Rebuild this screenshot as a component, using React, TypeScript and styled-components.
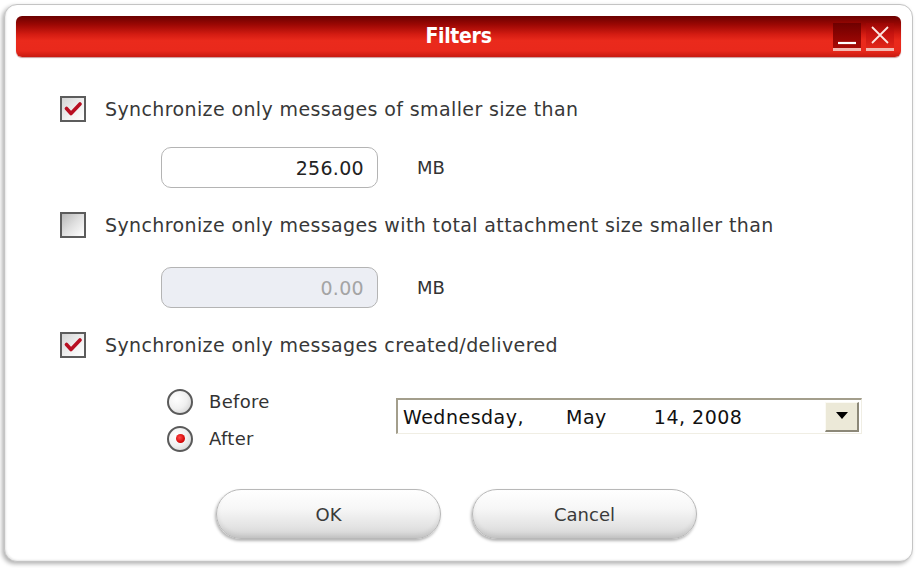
import styled, { createGlobalStyle } from 'styled-components';

const GlobalStyle = createGlobalStyle`
  html, body {
    margin: 0;
    padding: 0;
    background: #ffffff;
  }
  body {
    font-family: "DejaVu Sans", "Liberation Sans", sans-serif;
  }
`;

function CheckMark() {
  return (
    <svg width="18" height="16" viewBox="0 0 18 16">
      <path d="M2.5 7.5 L7 12.5 L16 3" fill="none" stroke="#b80f22" strokeWidth="3.6" strokeLinecap="round" strokeLinejoin="round" />
    </svg>
  );
}

function DropArrow() {
  return (
    <svg width="14" height="8" viewBox="0 0 14 8">
      <path d="M1 0 L13 0 L7 7 Z" fill="#000" />
    </svg>
  );
}

function MinIcon() {
  return (
    <svg width="22" height="22" viewBox="0 0 22 22">
      <line x1="2" y1="19" x2="20" y2="19" stroke="#fff" strokeWidth="2.2" />
    </svg>
  );
}

function CloseIcon() {
  return (
    <svg width="22" height="22" viewBox="0 0 22 22">
      <path d="M3 3 L19 19 M19 3 L3 19" stroke="#fde6e2" strokeWidth="1.8" fill="none" />
    </svg>
  );
}

export default function App() {
  return (
    <>
      <GlobalStyle />
      <Page>
        <Frame>
          <TitleBar>
            <span />
            <Title>Filters</Title>
            <Controls>
              <WinButton $tone="dark">
                <MinIcon />
              </WinButton>
              <WinButton $tone="bright">
                <CloseIcon />
              </WinButton>
            </Controls>
          </TitleBar>

          <Content>
            <CheckRow $top={39}>
              <CheckBox $checked>
                <CheckMark />
              </CheckBox>
              <Label>Synchronize only messages of smaller size than</Label>
            </CheckRow>
            <FieldRow $top={25}>
              <Field>256.00</Field>
              <Unit>MB</Unit>
            </FieldRow>

            <CheckRow $top={24}>
              <CheckBox />
              <Label>Synchronize only messages with total attachment size smaller than</Label>
            </CheckRow>
            <FieldRow $top={29}>
              <Field $disabled>0.00</Field>
              <Unit>MB</Unit>
            </FieldRow>

            <CheckRow $top={24}>
              <CheckBox $checked>
                <CheckMark />
              </CheckBox>
              <Label>Synchronize only messages created/delivered</Label>
            </CheckRow>

            <DateRow>
              <RadioGroup>
                <RadioRow>
                  <Radio />
                  <RadioLabel>Before</RadioLabel>
                </RadioRow>
                <RadioRow>
                  <Radio $checked />
                  <RadioLabel>After</RadioLabel>
                </RadioRow>
              </RadioGroup>
              <Combo>
                <ComboText>
                  <span>Wednesday,</span>
                  <Month>May</Month>
                  <span>14, 2008</span>
                </ComboText>
                <ComboButton>
                  <DropArrow />
                </ComboButton>
              </Combo>
            </DateRow>

            <ButtonRow>
              <PillButton>OK</PillButton>
              <PillButton>Cancel</PillButton>
            </ButtonRow>
          </Content>
        </Frame>
      </Page>
    </>
  );
}

const Page = styled.div`
  padding: 4px;
  width: 923px;
  height: 568px;
  box-sizing: border-box;
`;

const Frame = styled.div`
  width: 909px;
  height: 558px;
  box-sizing: border-box;
  border: 1px solid #c4c4c4;
  border-radius: 13px;
  padding: 11px;
  background: #fff;
  box-shadow: -2px 2px 4px rgba(0, 0, 0, 0.3), inset 1px -1px 2px rgba(0, 0, 0, 0.1);
  display: flex;
  flex-direction: column;
`;

const TitleBar = styled.div`
  height: 41px;
  border-radius: 6px;
  display: grid;
  grid-template-columns: 1fr auto 1fr;
  align-items: center;
  background: linear-gradient(
    to bottom,
    #6a0000 0%,
    #9e0804 22%,
    #d41c12 45%,
    #ea2a1c 60%,
    #e9291c 85%,
    #c81a10 100%
  );
  box-shadow: 0 1px 1px rgba(120, 0, 0, 0.4);
`;

const Title = styled.div`
  color: #fff;
  font-family: "DejaVu Sans Condensed", "DejaVu Sans", sans-serif;
  font-stretch: condensed;
  font-weight: bold;
  font-size: 21px;
  letter-spacing: -0.3px;
  padding-bottom: 2px;
`;

const Controls = styled.div`
  justify-self: end;
  display: flex;
  gap: 5px;
  margin-right: 7px;
`;

const WinButton = styled.div<{ $tone: 'dark' | 'bright' }>`
  width: 28px;
  height: 28px;
  box-sizing: border-box;
  display: flex;
  align-items: center;
  justify-content: center;
  background: ${({ $tone }) =>
    $tone === 'dark'
      ? 'linear-gradient(to bottom, #6e0000 0%, #8c0402 50%, #a80a06 100%)'
      : 'linear-gradient(to bottom, #9a0604 0%, #c81410 45%, #e2261a 100%)'};
  border-bottom: 3px solid #f4b8b0;
`;

const Content = styled.div`
  display: flex;
  flex-direction: column;
  padding-left: 44px;
  color: #333;
`;

const CheckRow = styled.div<{ $top: number }>`
  display: flex;
  align-items: center;
  gap: 19px;
  margin-top: ${({ $top }) => $top}px;
  height: 26px;
`;

const CheckBox = styled.div<{ $checked?: boolean }>`
  width: 26px;
  height: 26px;
  box-sizing: border-box;
  border: 2px solid #5c5c5c;
  display: flex;
  align-items: center;
  justify-content: center;
  background: ${({ $checked }) =>
    $checked
      ? 'linear-gradient(135deg, #d4d4d4 0%, #f2f2f2 60%, #ffffff 100%)'
      : 'linear-gradient(135deg, #b8b8b8 0%, #e0e0e0 50%, #ffffff 100%)'};
`;

const Label = styled.span`
  font-size: 19px;
  letter-spacing: 0.38px;
  color: #383838;
  white-space: nowrap;
`;

const FieldRow = styled.div<{ $top: number }>`
  display: flex;
  align-items: center;
  gap: 39px;
  margin-top: ${({ $top }) => $top}px;
  margin-left: 101px;
`;

const Field = styled.div<{ $disabled?: boolean }>`
  width: 217px;
  height: 41px;
  box-sizing: border-box;
  border: 1px solid #b4b4b4;
  border-radius: 10px;
  display: flex;
  align-items: center;
  justify-content: flex-end;
  padding-right: 13px;
  font-size: 19px;
  letter-spacing: 0.3px;
  color: ${({ $disabled }) => ($disabled ? '#a4a4a4' : '#222')};
  background: ${({ $disabled }) => ($disabled ? '#eceef4' : '#fff')};
`;

const Unit = styled.span`
  font-size: 18px;
  color: #333;
`;

const DateRow = styled.div`
  display: flex;
  margin-top: 31px;
  margin-left: 107px;
`;

const RadioGroup = styled.div`
  width: 229px;
  display: flex;
  flex-direction: column;
  gap: 12px;
`;

const RadioRow = styled.div`
  display: flex;
  align-items: center;
  gap: 16px;
  height: 25px;
`;

const Radio = styled.div<{ $checked?: boolean }>`
  width: 26px;
  height: 26px;
  box-sizing: border-box;
  border-radius: 50%;
  border: 2px solid #5a5a5a;
  background: radial-gradient(circle at 35% 35%, #ffffff 0%, #f0f0f0 50%, #c8c8c8 100%);
  display: flex;
  align-items: center;
  justify-content: center;

  &::after {
    content: '';
    display: ${({ $checked }) => ($checked ? 'block' : 'none')};
    width: 9px;
    height: 9px;
    border-radius: 50%;
    background: radial-gradient(circle at 40% 40%, #ff4a4a 0%, #d00000 70%, #a00000 100%);
  }
`;

const RadioLabel = styled.span`
  font-size: 18px;
  letter-spacing: 0.3px;
  color: #333;
`;

const Combo = styled.div`
  width: 466px;
  height: 36px;
  margin-top: 9px;
  box-sizing: border-box;
  border-top: 2px solid #a39e8c;
  border-left: 2px solid #a39e8c;
  border-right: 1px solid #f0eee4;
  border-bottom: 1px solid #f0eee4;
  display: flex;
  align-items: center;
  background: #fff;
`;

const ComboText = styled.div`
  flex: 1;
  display: flex;
  align-items: center;
  padding-left: 5px;
  font-size: 19px;
  letter-spacing: 0.5px;
  color: #111;
  white-space: nowrap;
`;

const Month = styled.span`
  margin-left: 42px;
  margin-right: 47px;
`;

const ComboButton = styled.div`
  width: 34px;
  height: 30px;
  margin-right: 2px;
  box-sizing: border-box;
  background: #ece9d8;
  border-top: 1px solid #fbfaf4;
  border-left: 1px solid #fbfaf4;
  border-right: 2px solid #8c8878;
  border-bottom: 2px solid #8c8878;
  display: flex;
  align-items: center;
  justify-content: center;
`;

const ButtonRow = styled.div`
  display: flex;
  gap: 31px;
  margin-top: 38px;
  margin-left: 156px;
`;

const PillButton = styled.div`
  width: 225px;
  height: 50px;
  box-sizing: border-box;
  border-radius: 25px;
  border: 1px solid #b8b8b8;
  background: linear-gradient(to bottom, #ffffff 0%, #f6f6f6 40%, #e4e4e4 75%, #d2d2d2 100%);
  box-shadow: -1px 2px 3px rgba(0, 0, 0, 0.3), inset 0 -3px 4px rgba(0, 0, 0, 0.08);
  display: flex;
  align-items: center;
  justify-content: center;
  font-size: 18px;
  color: #3a3a3a;
`;
